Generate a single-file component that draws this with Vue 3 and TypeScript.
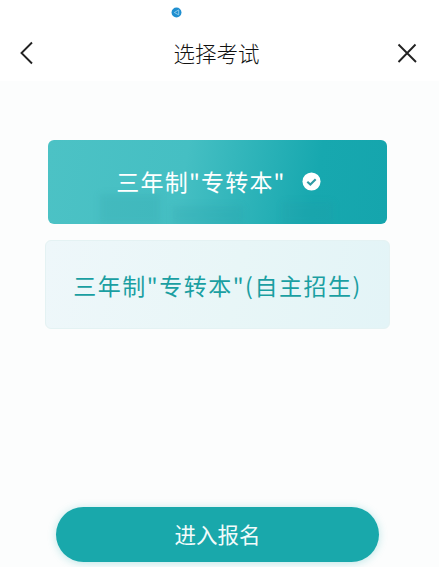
<script setup lang="ts">
const title = '选择考试'
</script>

<template>
  <div class="page">
    <div class="top">
      <div class="status">
        <svg class="dot" viewBox="0 0 12 12" width="11" height="11">
          <circle cx="6" cy="6" r="5.4" fill="#1f8fd0" />
          <path d="M8.4 3.2 3.6 6l4.8 2.6z" fill="none" stroke="#9fd3ee" stroke-width=".9" />
        </svg>
      </div>
      <header class="nav">
        <svg viewBox="0 0 16 26" width="16" height="26" class="back">
          <path d="M13 2.5 2.5 13 13 23.5" fill="none" stroke="#222" stroke-width="1.9" />
        </svg>
        <h1 class="title">{{ title }}</h1>
        <svg viewBox="0 0 22 22" width="22" height="22" class="close">
          <path d="M2.5 2.5l17.500 17.500M19.500 2.500 2.500 20" fill="none" stroke="#222" stroke-width="1.9" />
        </svg>
      </header>
    </div>
    <main class="main">
      <div class="options">
        <button class="card active">
          <span class="marks"><i class="m1"></i><i class="m2"></i><i class="m3"></i></span>
          <span class="label">三年制"专转本"</span>
          <svg viewBox="0 0 20 20" width="19" height="19" class="check">
            <circle cx="10" cy="10" r="9.5" fill="#fff" />
            <path d="M5.600 10.200l3.200 3 5.600-5.600" fill="none" stroke="#2f9aa3" stroke-width="2.200" />
          </svg>
        </button>
        <button class="card plain"><span class="label">三年制"专转本"(自主招生)</span></button>
      </div>
      <button class="enter">进入报名</button>
    </main>
  </div>
</template>

<style>
html, body { margin: 0; background: #fcfdfd; }
</style>

<style scoped>
.page {
  width: 439px;
  height: 567px;
  display: flex;
  flex-direction: column;
  overflow: hidden;
  background: #fcfdfd;
  font-family: "Noto Sans CJK SC", "Noto Sans", sans-serif;
}
.top { height: 81px; background: #fff; flex: none; }
.status { height: 24px; padding: 7px 0 0 171px; box-sizing: border-box; }
.dot { display: block; }
.nav {
  height: 57px;
  padding: 0 21px 0 19px;
  box-sizing: border-box;
  display: flex;
  align-items: center;
  justify-content: space-between;
}
.title { margin: 1px 0 0 2px; font-size: 21.500px; line-height: 30px; font-weight: 300; color: #111; }
.main {
  flex: 1;
  display: flex;
  flex-direction: column;
  justify-content: space-between;
  align-items: center;
  padding: 59px 4px 5px 0;
  min-height: 0;
}
.options { display: flex; flex-direction: column; align-items: center; gap: 16px; }
.card {
  border: 0;
  padding: 0;
  font-family: inherit;
  display: flex;
  align-items: center;
  justify-content: center;
  border-radius: 6px;
  font-size: 23px;
  letter-spacing: 1.200px;
  font-weight: 400;
}
.active {
  position: relative;
  overflow: hidden;
  width: 339px;
  height: 84px;
  color: #fff;
  gap: 16px;
  padding: 0 0 2px 2px;
  box-sizing: border-box;
  background: linear-gradient(100deg, #4cc2c5 0%, #45bfc3 40%, #17a8af 78%, #15a5ad 100%);
}
.active .label, .check { position: relative; }
.marks { position: absolute; inset: 0; }
.marks i { position: absolute; bottom: 0; display: block; background: rgba(40, 150, 160, .16); filter: blur(3px); }
.m1 { left: 52px; width: 60px; height: 30px; }
.m2 { left: 125px; width: 70px; height: 18px; }
.m3 { left: 235px; width: 50px; height: 22px; }
.plain {
  width: 345px;
  height: 89px;
  color: #1a9fa2;
  background: linear-gradient(100deg, #eef7fa 0%, #e8f6f7 55%, #e3f4f7 100%);
  border: 1px solid #e4f2f3;
  box-sizing: border-box;
  letter-spacing: 1.500px;
}
.enter {
  flex: none;
  width: 323px;
  height: 55px;
  border: 0;
  border-radius: 28px;
  background: #19a8ab;
  color: #f2fbfb;
  font-family: inherit;
  font-size: 21.500px;
  font-weight: 400;
  padding: 0 0 2px;
  box-shadow: 0 1px 8px rgba(25, 168, 171, .28);
}
</style>
